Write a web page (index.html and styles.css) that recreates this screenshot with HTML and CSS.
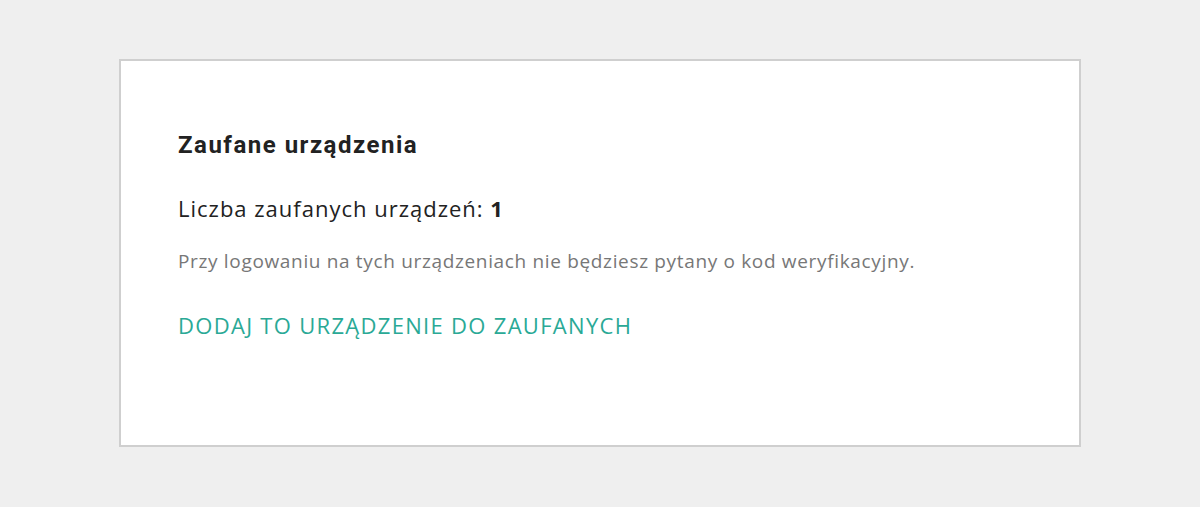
FILE: index.html
```html
<!DOCTYPE html>
<html lang="pl">
<head>
<meta charset="utf-8">
<link rel="stylesheet" href="styles.css">
</head>
<body>
<div class="page">
  <section class="card">
    <h2 class="title">Zaufane urządzenia</h2>
    <p class="count">Liczba zaufanych urządzeń: <b>1</b></p>
    <p class="note">Przy logowaniu na tych urządzeniach nie będziesz pytany o kod weryfikacyjny.</p>
    <a class="action" href="#">DODAJ TO URZĄDZENIE DO ZAUFANYCH</a>
  </section>
</div>
</body>
</html>
```
FILE: styles.css
```css
html, body {
  margin: 0;
  padding: 0;
  background: #efefef;
}
.page {
  padding: 59px 119px 0 119px;
}
.card {
  box-sizing: border-box;
  width: 962px;
  height: 388px;
  background: #fff;
  border: 2px solid #cfcfcf;
  padding: 69px 57px 0 57px;
  font-family: "Open Sans", sans-serif;
}
.title {
  margin: 0;
  font-family: Roboto, sans-serif;
  font-weight: 700;
  font-size: 24px;
  line-height: 30px;
  letter-spacing: 1.5px;
  color: #222;
}
.count {
  margin: 34px 0 0 0;
  font-size: 22px;
  line-height: 28px;
  letter-spacing: 1px;
  color: #222;
}
.count b {
  font-weight: 700;
}
.note {
  margin: 27px 0 0 0;
  font-size: 19px;
  line-height: 24px;
  letter-spacing: 0.66px;
  color: #777;
}
.action {
  display: inline-block;
  margin-top: 38px;
  font-size: 22px;
  line-height: 28px;
  letter-spacing: 1.3px;
  color: #2aa996;
  text-decoration: none;
}
```
